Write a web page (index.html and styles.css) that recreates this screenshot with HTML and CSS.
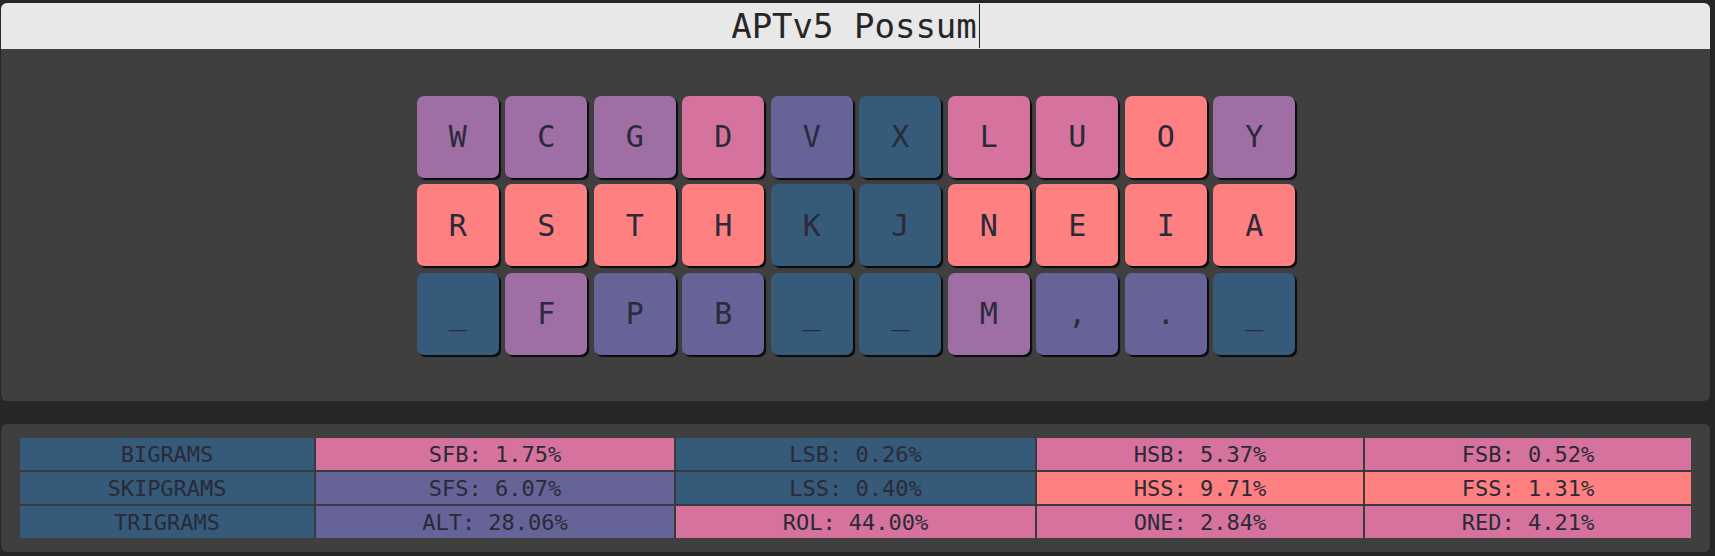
FILE: index.html
```html
<!DOCTYPE html>
<html>
<head>
<meta charset="utf-8">
<link rel="stylesheet" href="styles.css">
</head>
<body>
<div class="page">
  <section class="panel layout-panel">
    <div class="title-bar"><span class="title-text">APTv5 Possum</span><span class="caret"></span></div>
    <div class="board-area">
      <div class="board">
        <div class="row">
          <div class="key c-purple">W</div>
          <div class="key c-purple">C</div>
          <div class="key c-purple">G</div>
          <div class="key c-pink">D</div>
          <div class="key c-indigo">V</div>
          <div class="key c-blue">X</div>
          <div class="key c-pink">L</div>
          <div class="key c-pink">U</div>
          <div class="key c-salmon">O</div>
          <div class="key c-purple">Y</div>
        </div>
        <div class="row">
          <div class="key c-salmon">R</div>
          <div class="key c-salmon">S</div>
          <div class="key c-salmon">T</div>
          <div class="key c-salmon">H</div>
          <div class="key c-blue">K</div>
          <div class="key c-blue">J</div>
          <div class="key c-salmon">N</div>
          <div class="key c-salmon">E</div>
          <div class="key c-salmon">I</div>
          <div class="key c-salmon">A</div>
        </div>
        <div class="row">
          <div class="key c-blue">_</div>
          <div class="key c-purple">F</div>
          <div class="key c-indigo">P</div>
          <div class="key c-indigo">B</div>
          <div class="key c-blue">_</div>
          <div class="key c-blue">_</div>
          <div class="key c-purple">M</div>
          <div class="key c-indigo">,</div>
          <div class="key c-indigo">.</div>
          <div class="key c-blue">_</div>
        </div>
      </div>
    </div>
  </section>
  <section class="panel stats-panel">
    <div class="stats">
      <div class="cell c-blue">BIGRAMS</div>
      <div class="cell c-pink">SFB: 1.75%</div>
      <div class="cell c-blue">LSB: 0.26%</div>
      <div class="cell c-pink">HSB: 5.37%</div>
      <div class="cell c-pink">FSB: 0.52%</div>
      <div class="cell c-blue">SKIPGRAMS</div>
      <div class="cell c-indigo">SFS: 6.07%</div>
      <div class="cell c-blue">LSS: 0.40%</div>
      <div class="cell c-salmon">HSS: 9.71%</div>
      <div class="cell c-salmon">FSS: 1.31%</div>
      <div class="cell c-blue">TRIGRAMS</div>
      <div class="cell c-indigo">ALT: 28.06%</div>
      <div class="cell c-pink">ROL: 44.00%</div>
      <div class="cell c-pink">ONE: 2.84%</div>
      <div class="cell c-pink">RED: 4.21%</div>
    </div>
  </section>
</div>
</body>
</html>
```

FILE: styles.css
```css
html, body {
  margin: 0;
  padding: 0;
  background: #262626;
}

body {
  font-family: "DejaVu Sans Mono", "Liberation Mono", monospace;
  color: #2a2a36;
}

.page {
  width: 1709px;
  padding: 3px 0 0 1px;
  display: flex;
  flex-direction: column;
  gap: 23px;
}

.panel {
  background: #3f3f3f;
  border-radius: 6px;
}

.layout-panel {
  height: 398px;
  display: flex;
  flex-direction: column;
  overflow: hidden;
}

.title-bar {
  height: 46px;
  background: #e8e8e8;
  display: flex;
  align-items: center;
  justify-content: center;
  font-size: 34px;
  color: #262626;
  letter-spacing: 0;
}

.caret {
  display: inline-block;
  width: 0;
  height: 44px;
  border-left: 1px solid #222;
  margin-left: 2px;
}

.board-area {
  flex: 1;
  display: flex;
  align-items: center;
  justify-content: center;
}

.board {
  display: flex;
  flex-direction: column;
  gap: 6.5px;
  margin-left: 1px;
}

.row {
  display: flex;
  gap: 6.5px;
}

.key {
  width: 82px;
  height: 82px;
  border-radius: 7px;
  box-shadow: 2px 2px 1px #0a0a0a;
  display: flex;
  align-items: center;
  justify-content: center;
  font-size: 30px;
  color: #2b2a38;
}

.c-purple { background: #9e6ea5; }
.c-pink { background: #d5739e; }
.c-salmon { background: #ff8080; }
.c-indigo { background: #666398; }
.c-blue { background: #355a7a; }

.stats-panel {
  height: 128px;
  padding: 14px 19px;
  box-sizing: border-box;
}

.stats {
  display: grid;
  grid-template-columns: 294px 358px 359px 326px 326px;
  grid-auto-rows: 32px;
  gap: 2px;
  background: #3a3a3a;
}

.cell {
  display: flex;
  align-items: center;
  justify-content: center;
  font-size: 22px;
  color: #2a2a36;
}
```
